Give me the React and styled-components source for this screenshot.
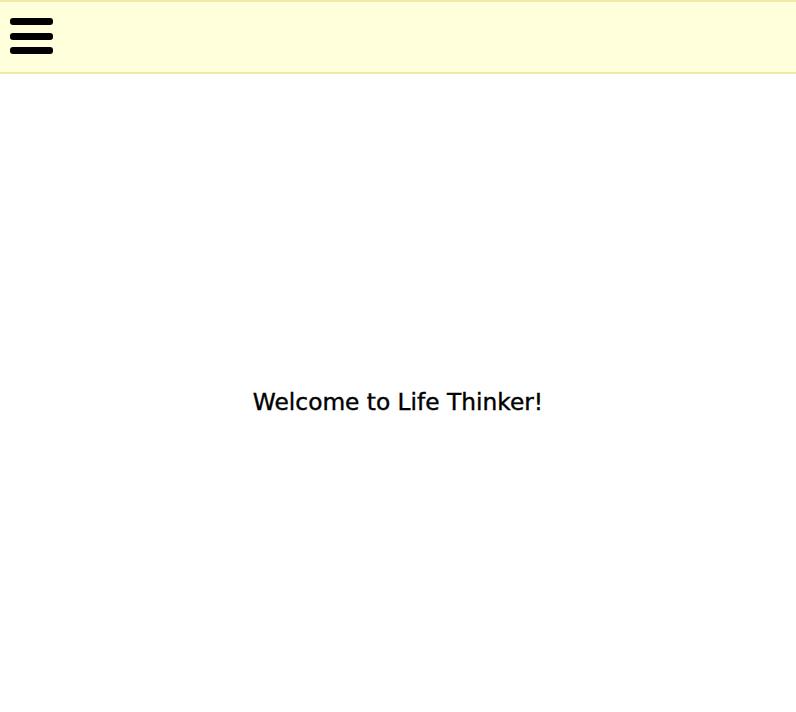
import React from 'react'
import styled, { createGlobalStyle } from 'styled-components'

const GlobalStyle = createGlobalStyle`
  html, body {
    margin: 0;
    padding: 0;
    background: #ffffff;
  }
  body {
    font-family: "DejaVu Sans", "Noto Sans", sans-serif;
  }
`

const Header = styled.header`
  box-sizing: border-box;
  height: 74px;
  display: flex;
  align-items: flex-start;
  padding: 16px 10px 0;
  background: #ffffdc;
  border-top: 2px solid #f0e8a8;
  border-bottom: 2px solid #f0e8a8;
`

const MenuButton = styled.button`
  display: flex;
  flex-direction: column;
  gap: 7.5px;
  padding: 0;
  margin: 0;
  border: none;
  background: none;
  cursor: pointer;
`

const Bar = styled.span`
  display: block;
  width: 43px;
  height: 7px;
  border-radius: 3px;
  background: #000;
`

const Main = styled.main`
  height: 638px;
  display: flex;
  align-items: center;
  justify-content: center;
  padding-top: 16px;
  box-sizing: border-box;
`

const Title = styled.h1`
  margin: 0;
  font-size: 23.3px;
  font-weight: normal;
  color: #000;
  -webkit-text-stroke: 0.4px #000;
`

const App = () => (
  <>
    <GlobalStyle />
    <Header>
      <MenuButton aria-label="menu">
        <Bar />
        <Bar />
        <Bar />
      </MenuButton>
    </Header>
    <Main>
      <Title>Welcome to Life Thinker!</Title>
    </Main>
  </>
)

export default App
